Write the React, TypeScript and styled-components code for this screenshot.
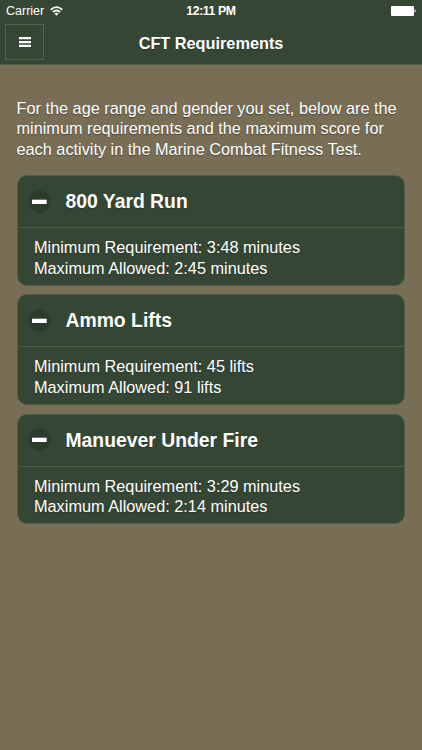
import React from "react";
import styled, { createGlobalStyle } from "styled-components";

const GlobalStyle = createGlobalStyle`
  * { box-sizing: border-box; }
  body { margin: 0; background: #786e56; font-family: "Liberation Sans", Arial, sans-serif; color: #fff; }
`;
const Page = styled.div`
  min-height: 750px;
  background: #786e56;
`;
const Top = styled.div`
  height: 65px;
  background: #364635;
  border-bottom: 1px solid #4d5d47;
`;
const StatusBar = styled.div`
  display: grid;
  grid-template-columns: 1fr auto 1fr;
  align-items: center;
  height: 22px;
  padding: 0 6px;
  font-size: 12.5px;
`;
const Carrier = styled.div`
  display: flex;
  align-items: center;
  gap: 6px;
`;
const Clock = styled.div`
  font-weight: 700;
  font-size: 12.3px;
  letter-spacing: -0.4px;
`;
const Battery = styled.svg`
  justify-self: end;
`;
const Header = styled.div`
  display: grid;
  grid-template-columns: 39px 1fr 39px;
  align-items: center;
  height: 40px;
  padding: 0 5px;
`;
const MenuButton = styled.button`
  display: flex;
  align-items: center;
  justify-content: center;
  width: 39px;
  height: 36px;
  padding: 0;
  border: 1px solid #52644e;
  background: #364635;
`;
const Title = styled.h1`
  margin: 0;
  padding-top: 1px;
  text-align: center;
  font-size: 16.3px;
  line-height: 20px;
  text-shadow: 0 1px 0 #2a372a;
`;
const Content = styled.main`
  padding: 32.6px 17px 0 16.5px;
`;
const Line = styled.div`
  white-space: nowrap;
  font-size: 16.3px;
  line-height: 20.5px;
`;
const Intro = styled.div`
  text-shadow: 0 1px 1px #4a4434;
`;
const Cards = styled.div`
  display: flex;
  flex-direction: column;
  gap: 8.8px;
  margin-top: 16px;
`;
const Card = styled.section`
  height: 110.5px;
  border: 1px solid #4b5f49;
  border-radius: 10px;
  background: #364635;
`;
const CardHead = styled.div`
  display: flex;
  align-items: center;
  gap: 14.5px;
  height: 52px;
  padding: 0 10.5px 1px;
  border-bottom: 1px solid #4b5f49;
`;
const CardTitle = styled.h2`
  margin: 0;
  font-size: 19.35px;
  line-height: 24px;
  text-shadow: 0 1px 0 #2a372a;
`;
const CardBody = styled.div`
  padding: 9px 16.5px;
  text-shadow: 0 1px 1px #2a372a;
`;

const cards = [
  { title: "800 Yard Run", min: "3:48 minutes", max: "2:45 minutes" },
  { title: "Ammo Lifts", min: "45 lifts", max: "91 lifts" },
  { title: "Manuever Under Fire", min: "3:29 minutes", max: "2:14 minutes" },
];

export default function App() {
  return (
    <Page>
      <GlobalStyle />
      <Top>
        <StatusBar>
          <Carrier>
            Carrier
            <svg width="13" height="10" viewBox="0 0 13 10" fill="none" stroke="#fff" strokeWidth="1.8">
              <path d="M.7 3.8Q6.5-1.6 12.3 3.8M2.9 6.1Q6.5 3 10.1 6.1" />
              <path d="M6.5 9.8L4.4 7.6Q6.5 6 8.6 7.6Z" fill="#fff" stroke="none" />
            </svg>
          </Carrier>
          <Clock>12:11 PM</Clock>
          <Battery width="25" height="10" viewBox="0 0 25 10" fill="#fff">
            <rect width="23" height="10" rx="1" />
            <path d="M23.5 3.3Q26 5 23.5 6.7Z" />
          </Battery>
        </StatusBar>
        <Header>
          <MenuButton aria-label="Menu">
            <svg width="12" height="10" viewBox="0 0 12 10" fill="#fff">
              <path d="M0 0h12v2.3H0zM0 3.9h12v2.3H0zM0 7.7h12V10H0z" />
            </svg>
          </MenuButton>
          <Title>CFT Requirements</Title>
        </Header>
      </Top>
      <Content>
        <Intro>
          <Line>For the age range and gender you set, below are the</Line>
          <Line>minimum requirements and the maximum score for</Line>
          <Line>each activity in the Marine Combat Fitness Test.</Line>
        </Intro>
        <Cards>
          {cards.map((c) => (
            <Card key={c.title}>
              <CardHead>
                <svg width="23" height="23" viewBox="0 0 23 23">
                  <circle cx="11.5" cy="11.5" r="11" fill="#2d3b2d" />
                  <path d="M4 9.7h14.7v4.3H4z" fill="#fff" />
                </svg>
                <CardTitle>{c.title}</CardTitle>
              </CardHead>
              <CardBody>
                <Line>Minimum Requirement: {c.min}</Line>
                <Line>Maximum Allowed: {c.max}</Line>
              </CardBody>
            </Card>
          ))}
        </Cards>
      </Content>
    </Page>
  );
}
